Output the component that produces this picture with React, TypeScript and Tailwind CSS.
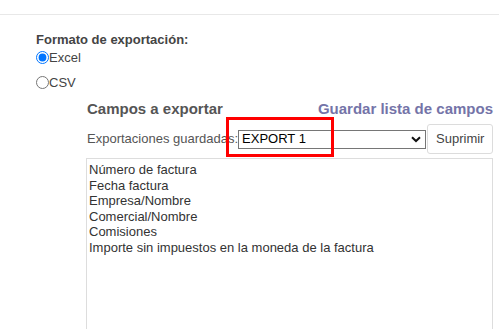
import { useState } from "react";

const campos = [
  "Número de factura",
  "Fecha factura",
  "Empresa/Nombre",
  "Comercial/Nombre",
  "Comisiones",
  "Importe sin impuestos en la moneda de la factura",
];

export default function App() {
  const [formato, setFormato] = useState("excel");

  return (
    <div className="min-h-screen bg-white font-['Liberation_Sans',Arial,sans-serif] text-[13px] text-[#333]">
      <div className="h-[15px] border-b border-[#e8e8e8]"></div>

      <div className="pl-[36px] pr-[6px] pt-[17px]">
        <div className="font-bold text-[#444] leading-[15px]">Formato de exportación:</div>

        <label className="flex items-center mt-[4px] h-[13px] leading-[13px]">
          <input
            type="radio"
            name="formato"
            className="w-[13px] h-[13px] m-0"
            checked={formato === "excel"}
            onChange={() => setFormato("excel")}
          />
          <span className="text-[#444]">Excel</span>
        </label>

        <label className="flex items-center mt-[12px] h-[13px] leading-[13px]">
          <input
            type="radio"
            name="formato"
            className="w-[13px] h-[13px] m-0"
            checked={formato === "csv"}
            onChange={() => setFormato("csv")}
          />
          <span className="text-[#444]">CSV</span>
        </label>

        <div className="ml-[50px] mt-[11px]">
          <div className="flex items-center justify-between text-[15px] font-bold leading-[17px]">
            <span className="text-[#555] pl-[1px]">Campos a exportar</span>
            <a href="#" className="text-[#7474a8]">Guardar lista de campos</a>
          </div>

          <div className="relative flex items-center mt-[7px] h-[30px]">
            <span className="shrink-0 whitespace-nowrap text-[#555] pl-[1px]">Exportaciones guardadas:</span>
            <div className="shrink-0 flex items-center justify-between w-[188px] h-[19px] border border-[#767676] bg-white pl-[3px] pr-[4px] text-black">
              <span>EXPORT 1</span>
              <svg width="10" height="7" viewBox="0 0 10 7" fill="none">
                <path d="M1 1.2 L5 5 L9 1.2" stroke="#111" strokeWidth="2" />
              </svg>
            </div>
            <button className="shrink-0 ml-[1px] h-[30px] px-[8px] border border-[#dcdcdc] rounded-[3px] bg-white text-[#444]">
              Suprimir
            </button>
            <div className="absolute left-[140px] top-[-7px] w-[108px] h-[40px] border-[3px] border-[#ff0000]"></div>
          </div>

          <div className="mt-[4px] h-[200px] border border-[#dddddd] pl-[2px] pt-[3px]">
            {campos.map((c) => (
              <div key={c} className="leading-[15.5px] text-[#333]">{c}</div>
            ))}
          </div>
        </div>
      </div>
    </div>
  );
}
